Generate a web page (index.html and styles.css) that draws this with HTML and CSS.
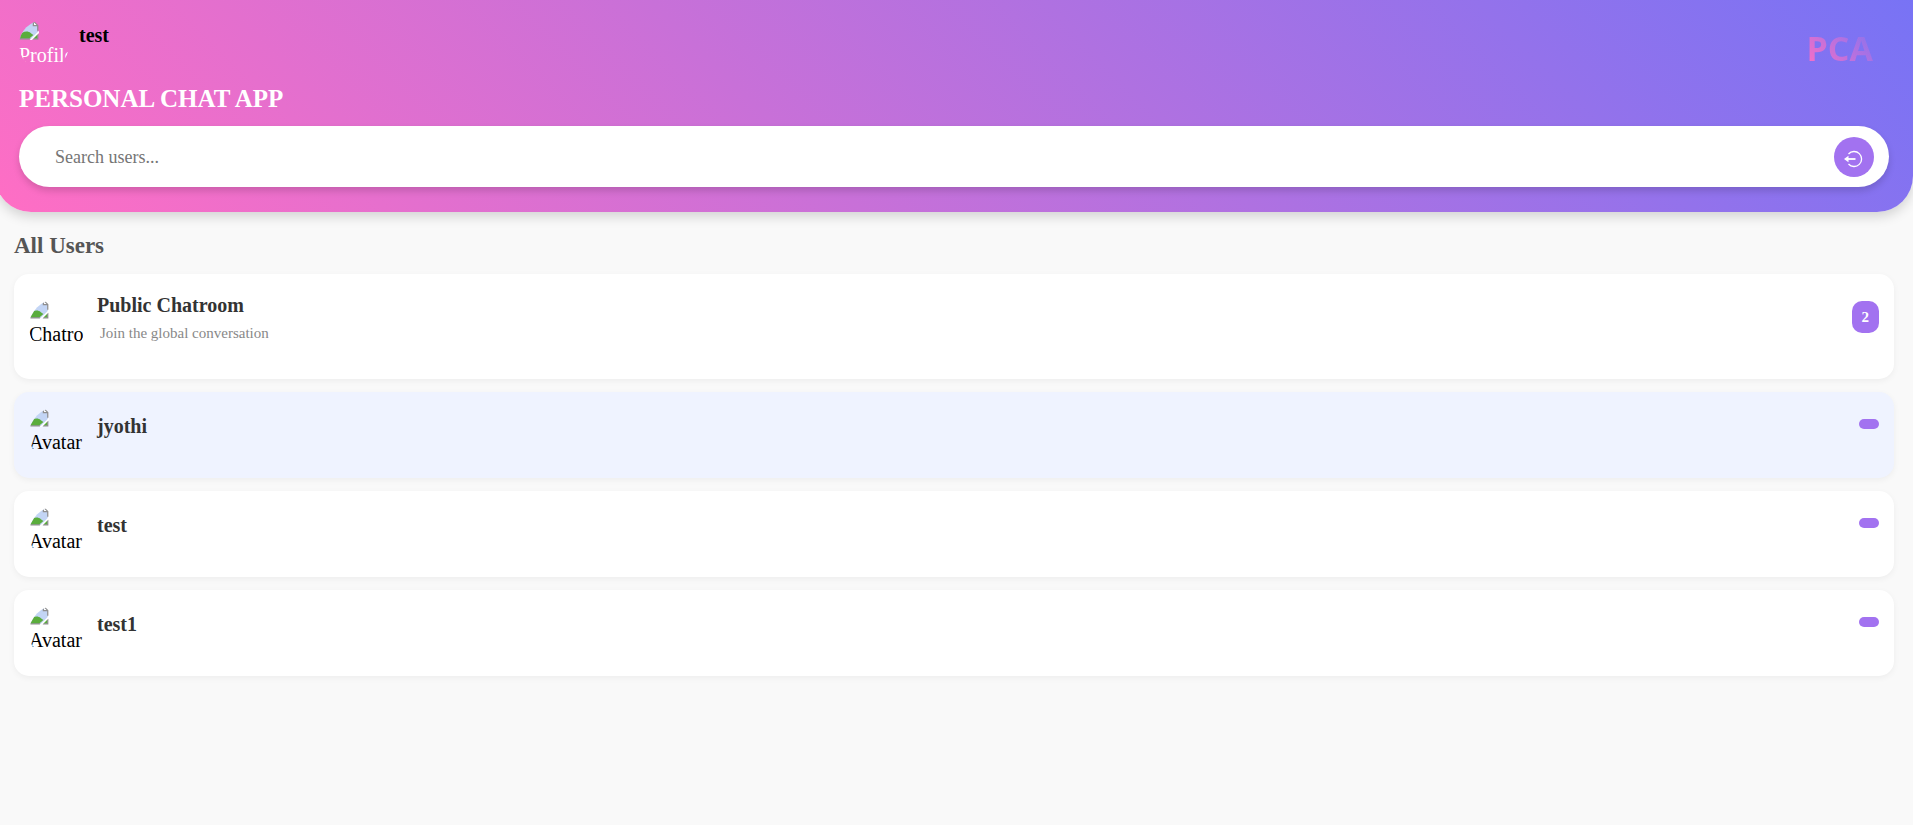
FILE: index.html
```html
<!DOCTYPE html>
<html lang="en">
<head>
<meta charset="utf-8">
<meta name="viewport" content="width=device-width, initial-scale=1">
<title>Personal Chat App</title>
<link rel="stylesheet" href="styles.css">
</head>
<body>
<svg class="defs" aria-hidden="true">
  <symbol id="picture" viewBox="0 0 16 16">
    <path d="M0 1h11.500l3.500 3.500v10.500H0z" fill="#c3d5f5"/>
    <path d="M0 15v-2c2-3.500 6.500-5 9.500-2.500l2 1.500-3.500 3z" fill="#5aad3c"/>
    <path d="M11 15l4-4v4z" fill="#5aad3c"/>
    <path d="M0 15h9M11 15h4.500M15 11v4M15 8.500V4.500L11.500 1H0M11.500 1v3.500H15" fill="none" stroke="#8f8f8f"/>
    <path d="M12 2l2 2h-2z" fill="#fff"/>
    <path class="tear" d="M8.500 16l7.500-7.500v1.800L10.300 16z"/>
  </symbol>
</svg>
<header class="header">
  <div class="top">
    <div class="profile">
      <div class="avatar avatar-profile"><svg class="picture"><use href="#picture"/></svg><span>Profile</span></div>
      <strong class="me">test</strong>
    </div>
    <div class="logo">PCA</div>
  </div>
  <h1 class="title">PERSONAL CHAT APP</h1>
  <form class="search">
    <input class="search-input" type="text" placeholder="Search users..." aria-label="Search users">
    <button class="logout" type="button" aria-label="Log out">
      <svg class="logout-icon" viewBox="0 0 20 20" fill="none" stroke="#fff" stroke-width="1.300">
        <path d="M4.500 5A7.500 7.500 0 1 1 4.500 15"/>
        <path d="M3 10h8.500" stroke-width="1.800"/>
        <path d="M0 10l4.500-3.300v6.600z" fill="#fff" stroke="none"/>
      </svg>
    </button>
  </form>
</header>
<main class="users">
  <h2 class="heading">All Users</h2>
  <ul class="list">
    <li class="card card-room">
      <div class="avatar"><svg class="picture"><use href="#picture"/></svg><span>Chatro</span></div>
      <div class="info"><h3 class="name">Public Chatroom</h3><p class="note">Join the global conversation</p></div>
      <span class="badge">2</span>
    </li>
    <li class="card card-active">
      <div class="avatar"><svg class="picture"><use href="#picture"/></svg><span>Avatar</span></div>
      <div class="info"><h3 class="name">jyothi</h3></div>
      <span class="badge"></span>
    </li>
    <li class="card">
      <div class="avatar"><svg class="picture"><use href="#picture"/></svg><span>Avatar</span></div>
      <div class="info"><h3 class="name">test</h3></div>
      <span class="badge"></span>
    </li>
    <li class="card">
      <div class="avatar"><svg class="picture"><use href="#picture"/></svg><span>Avatar</span></div>
      <div class="info"><h3 class="name">test1</h3></div>
      <span class="badge"></span>
    </li>
  </ul>
</main>
</body>
</html>
```
FILE: styles.css
```css
* { box-sizing: border-box; }
body {
  margin: 0;
  background: #f9f9f9;
  font-family: "Liberation Serif", "Times New Roman", serif;
  font-size: 20px;
  color: #000;
}
h1, h2, h3, p, ul { margin: 0; padding: 0; }
.defs { position: absolute; width: 0; height: 0; }
.tear { fill: #fff; }

.header {
  margin-left: -5px;
  padding: 20px 24px 25px;
  background: linear-gradient(45deg, #ff6ec4, #7873f5);
  border-radius: 0 0 36px 36px;
  box-shadow: 0 5px 12px rgba(0, 0, 0, 0.15);
  color: #fff;
}
.top { display: flex; justify-content: space-between; align-items: flex-start; }
.profile { display: flex; gap: 10px; }
.me { margin-top: 4px; line-height: 22px; color: #000; }
.logo {
  margin-right: 16px;
  padding-top: 6px;
  font: bold 34px/44px "Open Sans", "Noto Sans", sans-serif;
  background: linear-gradient(45deg, #ff6ec4, #7873f5);
  -webkit-background-clip: text;
  background-clip: text;
  color: transparent;
}
.title { margin-top: 13px; font-size: 25px; line-height: 32px; }
.search {
  display: flex;
  align-items: center;
  margin-top: 11px;
  padding: 10px 15px 10px 36px;
  background: #fff;
  border-radius: 31px;
  box-shadow: 0 4px 7px rgba(0, 0, 0, 0.15);
}
.search-input {
  flex: 1;
  min-width: 0;
  height: 41px;
  padding: 2px 0 0;
  border: 0;
  outline: 0;
  background: none;
  font-family: inherit;
  font-size: 18px;
}
.search-input::placeholder { color: #757575; }
.logout {
  display: grid;
  place-items: center;
  width: 40px;
  height: 40px;
  padding: 4px 0 0;
  border: 0;
  border-radius: 50%;
  background: #a272f0;
}
.logout-icon { width: 20px; height: 20px; }

.avatar {
  flex: none;
  width: 56px;
  height: 56px;
  border-radius: 50%;
  overflow: hidden;
  line-height: 22px;
}
.avatar-profile { width: 50px; height: 50px; }
.avatar-profile .tear { fill: #f36ec8; }
.picture { display: block; width: 20px; height: 20px; }
.avatar span { display: block; padding-top: 4px; }

.users { padding: 20px 19px 20px 14px; }
.heading { font-size: 23px; line-height: 28px; color: #555; }
.list { display: flex; flex-direction: column; gap: 13px; margin-top: 14px; list-style: none; }
.card {
  display: flex;
  gap: 12px;
  padding: 15px;
  background: #fff;
  border-radius: 15px;
  box-shadow: 0 2px 6px rgba(0, 0, 0, 0.05);
}
.card-active { background: #eff3ff; }
.card-room .avatar { align-self: center; }
.info { flex: 1; padding-top: 8px; }
.card-room .info { padding: 5px 0 21px; }
.name { font-size: 20px; line-height: 22px; color: #333; }
.note { padding: 7px 3px 0; font-size: 15px; line-height: 20px; color: #888; }
.badge {
  align-self: flex-start;
  margin-top: 12px;
  padding: 5px 10px;
  border-radius: 10px;
  background: #a272f0;
  color: #fff;
  font-size: 15px;
  font-weight: bold;
  line-height: 22px;
}
```
